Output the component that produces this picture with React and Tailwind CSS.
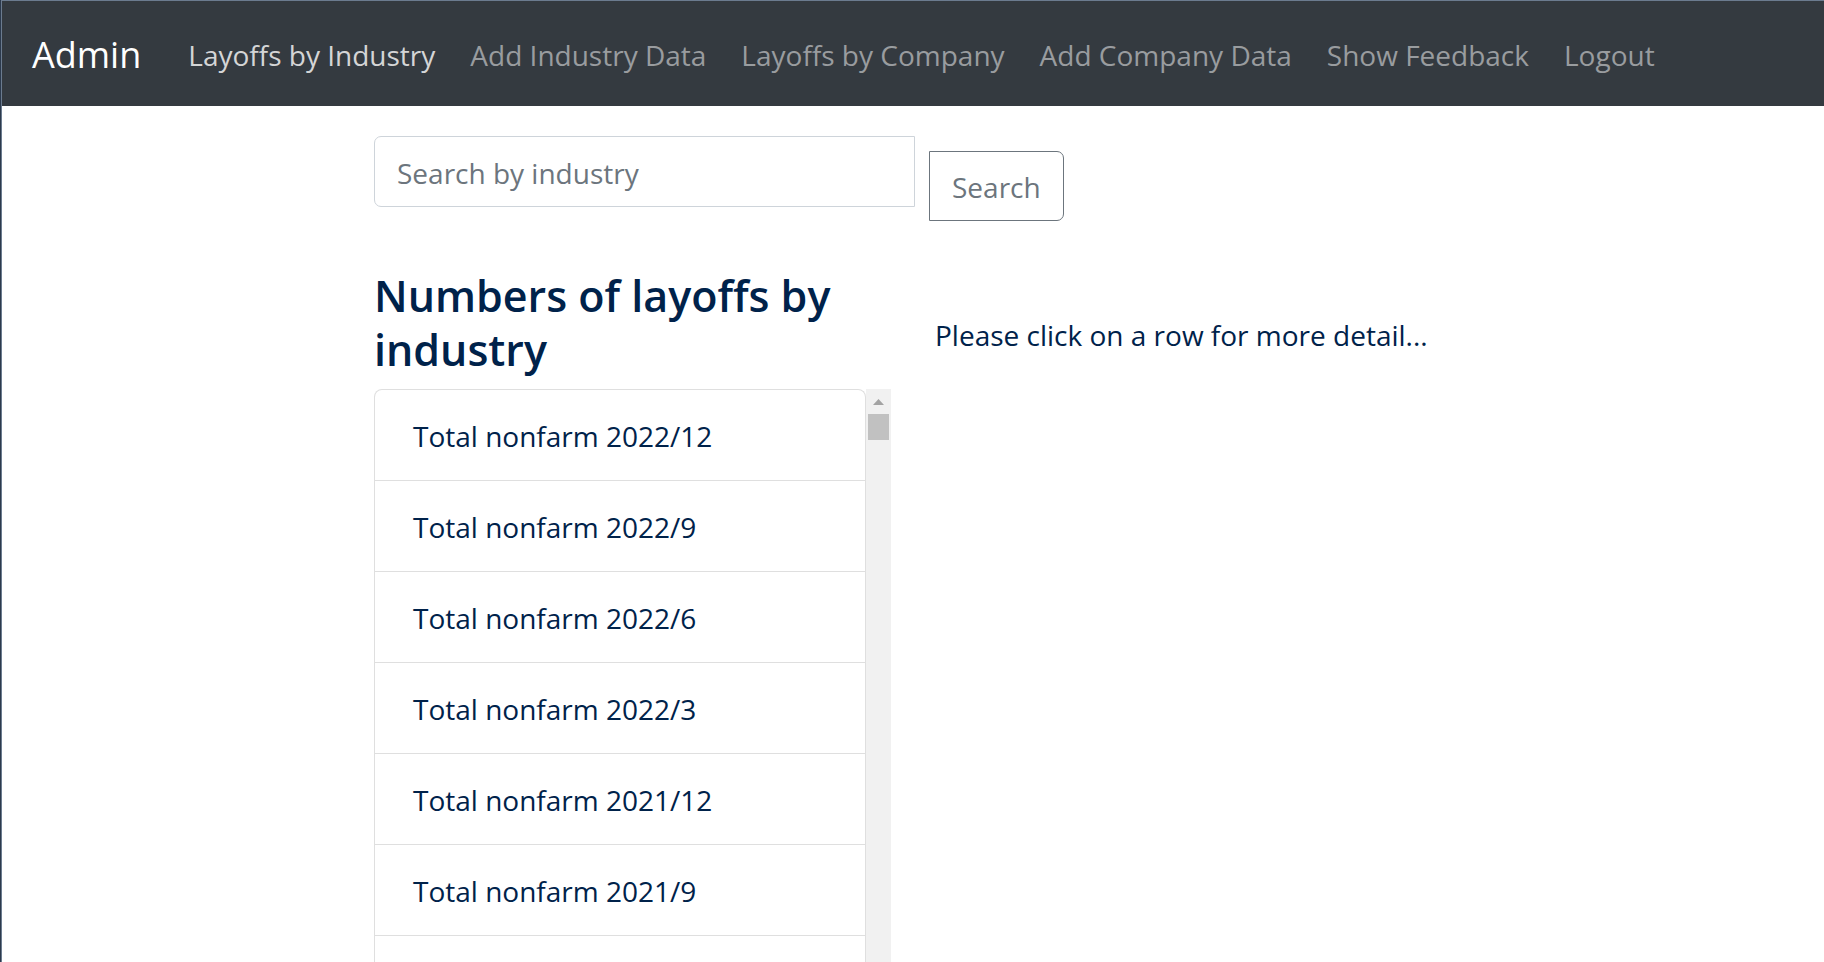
import React, { useState } from "react";

const links = [
  "Layoffs by Industry",
  "Add Industry Data",
  "Layoffs by Company",
  "Add Company Data",
  "Show Feedback",
  "Logout",
];

const periods = ["2022/12", "2022/9", "2022/6", "2022/3", "2021/12", "2021/9"];

function NavBar() {
  return (
    <nav className="flex h-[106px] items-center border-t border-[#6b7b8f] bg-[#343a40] px-[30px] pt-[2px]">
      <a href="#admin" className="mr-[47px] text-[36px] leading-[56px] text-white">
        Admin
      </a>
      <ul className="flex gap-[35px] pt-[2px] whitespace-nowrap">
        {links.map((label, i) => (
          <li key={label}>
            <a
              href="#nav"
              aria-current={i === 0 ? "page" : undefined}
              className={i === 0 ? "text-[#d4d5d6]" : "text-[#999c9f]"}
            >
              {label}
            </a>
          </li>
        ))}
      </ul>
    </nav>
  );
}

function SearchForm() {
  const [query, setQuery] = useState("");
  return (
    <form className="flex items-start gap-[14px]" onSubmit={(e) => e.preventDefault()}>
      <input
        type="text"
        aria-label="Search by industry"
        placeholder="Search by industry"
        value={query}
        onChange={(e) => setQuery(e.target.value)}
        className="h-[71px] w-[541px] rounded-l-[7px] border border-[#ced4da] px-[22px] pt-[2px] placeholder:text-[#6c757d] placeholder:opacity-100"
      />
      <button
        type="submit"
        className="mt-[15px] h-[70px] rounded-r-[7px] border border-[#6c757d] px-[22px] pt-[2px] text-[#6c757d]"
      >
        Search
      </button>
    </form>
  );
}

function IndustryList() {
  return (
    <div className="flex grow">
      <ul className="grow rounded-t-[8px] border border-b-0 border-[#dfdfdf]">
        {periods.map((p) => (
          <li key={p} className="flex h-[91px] items-center border-b border-[#dfdfdf] px-[38px] pt-[2px]">
            Total nonfarm {p}
          </li>
        ))}
      </ul>
      <div aria-hidden="true" className="flex w-[25px] flex-col items-center bg-[#f1f1f1]">
        <svg width="25" height="25" viewBox="0 0 25 25">
          <path d="M7 16 L12.5 10 L18 16 Z" fill="#a3a3a3" />
        </svg>
        <div className="h-[26px] w-[21px] bg-[#c1c1c1]" />
      </div>
    </div>
  );
}

export default function App() {
  return (
    <div className="min-h-screen border-l border-[#2c3a4d] bg-white font-['Open_Sans',sans-serif] text-[28px] leading-[45px] text-[#00224a]">
      <div className="flex min-h-screen flex-col border-l border-[#6b7b8f]">
        <NavBar />
        <main className="mx-auto flex w-full max-w-[1078px] grow flex-col pt-[30px]">
          <SearchForm />
          <div className="mt-12 grid grow grid-cols-2 gap-[44px]">
            <section className="flex flex-col">
              <h1 className="mb-3 text-[43px] leading-[54px] font-semibold">
                Numbers of layoffs by industry
              </h1>
              <IndustryList />
            </section>
            <p className="pt-[44px]">Please click on a row for more detail...</p>
          </div>
        </main>
      </div>
    </div>
  );
}
